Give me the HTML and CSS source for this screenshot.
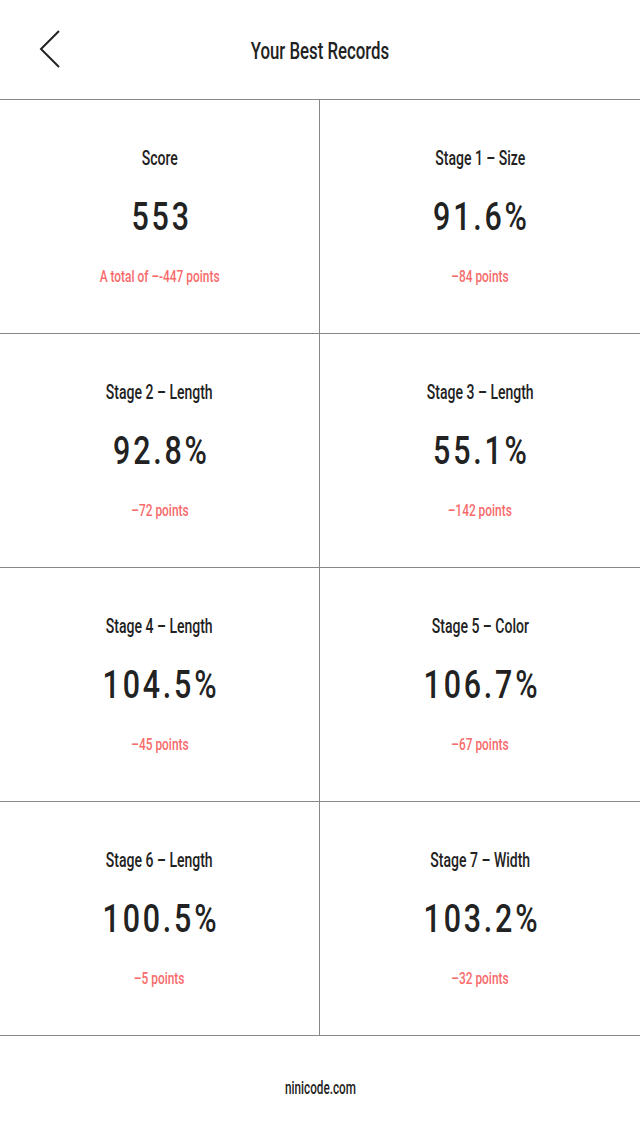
FILE: index.html
```html
<!DOCTYPE html>
<html lang="en">
<head>
    <meta charset="UTF-8">
    <meta name="viewport" content="width=device-width, initial-scale=1.0">
    <title>Your Best Records</title>
    <link rel="stylesheet" href="styles.css">
</head>
<body>
    <header class="top-bar">
        <a class="back-button" href="#" aria-label="Back">
            <svg width="24" height="40" viewBox="0 0 24 40">
                <polyline points="21,2 3,20 21,38" fill="none" stroke="#222" stroke-width="2"/>
            </svg>
        </a>
        <h1 class="page-title">Your Best Records</h1>
    </header>

    <div class="records">
        <div class="record">
            <div class="record-title">Score</div>
            <div class="record-value">553</div>
            <div class="record-diff">A total of –-447 points</div>
        </div>
        <div class="record">
            <div class="record-title">Stage 1 – Size</div>
            <div class="record-value">91.6%</div>
            <div class="record-diff">–84 points</div>
        </div>
        <div class="record">
            <div class="record-title">Stage 2 – Length</div>
            <div class="record-value">92.8%</div>
            <div class="record-diff">–72 points</div>
        </div>
        <div class="record">
            <div class="record-title">Stage 3 – Length</div>
            <div class="record-value">55.1%</div>
            <div class="record-diff">–142 points</div>
        </div>
        <div class="record">
            <div class="record-title">Stage 4 – Length</div>
            <div class="record-value">104.5%</div>
            <div class="record-diff">–45 points</div>
        </div>
        <div class="record">
            <div class="record-title">Stage 5 – Color</div>
            <div class="record-value">106.7%</div>
            <div class="record-diff">–67 points</div>
        </div>
        <div class="record">
            <div class="record-title">Stage 6 – Length</div>
            <div class="record-value">100.5%</div>
            <div class="record-diff">–5 points</div>
        </div>
        <div class="record">
            <div class="record-title">Stage 7 – Width</div>
            <div class="record-value">103.2%</div>
            <div class="record-diff">–32 points</div>
        </div>
    </div>

    <footer class="footer"><span class="footer-link">ninicode.com</span></footer>
</body>
</html>
```

FILE: styles.css
```css
body {
    margin: 0;
    padding: 0;
    font-family: Roboto, sans-serif;
    background-color: #fff;
    color: #222;
}
.page-title,
.record-title,
.record-diff,
.footer-link {
    font-weight: 500;
    transform: scaleX(0.7);
}
.top-bar {
    height: 99px;
    border-bottom: 1px solid #888;
    display: flex;
    align-items: center;
    justify-content: center;
    position: relative;
}
.back-button {
    position: absolute;
    left: 38px;
    top: 29px;
    display: block;
    line-height: 0;
}
.page-title {
    margin: 0;
    font-size: 24px;
    line-height: 30px;
    padding-top: 2px;
}
.records {
    display: grid;
    grid-template-columns: 1fr 1fr;
}
.record {
    height: 233px;
    border-bottom: 1px solid #888;
    display: flex;
    flex-direction: column;
    align-items: center;
    justify-content: center;
    gap: 29px;
    text-align: center;
}
.record:nth-child(odd) {
    border-right: 1px solid #888;
}
.record-title {
    font-size: 20px;
    line-height: 20px;
}
.record-value {
    font-size: 38px;
    font-weight: 500;
    line-height: 40px;
    letter-spacing: 3.5px;
    margin-right: -3.5px;
    transform: scaleX(0.8);
}
.record-diff {
    font-size: 17px;
    line-height: 20px;
    color: #f76b6b;
}
.footer {
    height: 100px;
    display: flex;
    align-items: center;
    justify-content: center;
    padding-top: 2px;
    box-sizing: border-box;
}
.footer-link {
    font-size: 18px;
    transform: scaleX(0.65);
}
```
